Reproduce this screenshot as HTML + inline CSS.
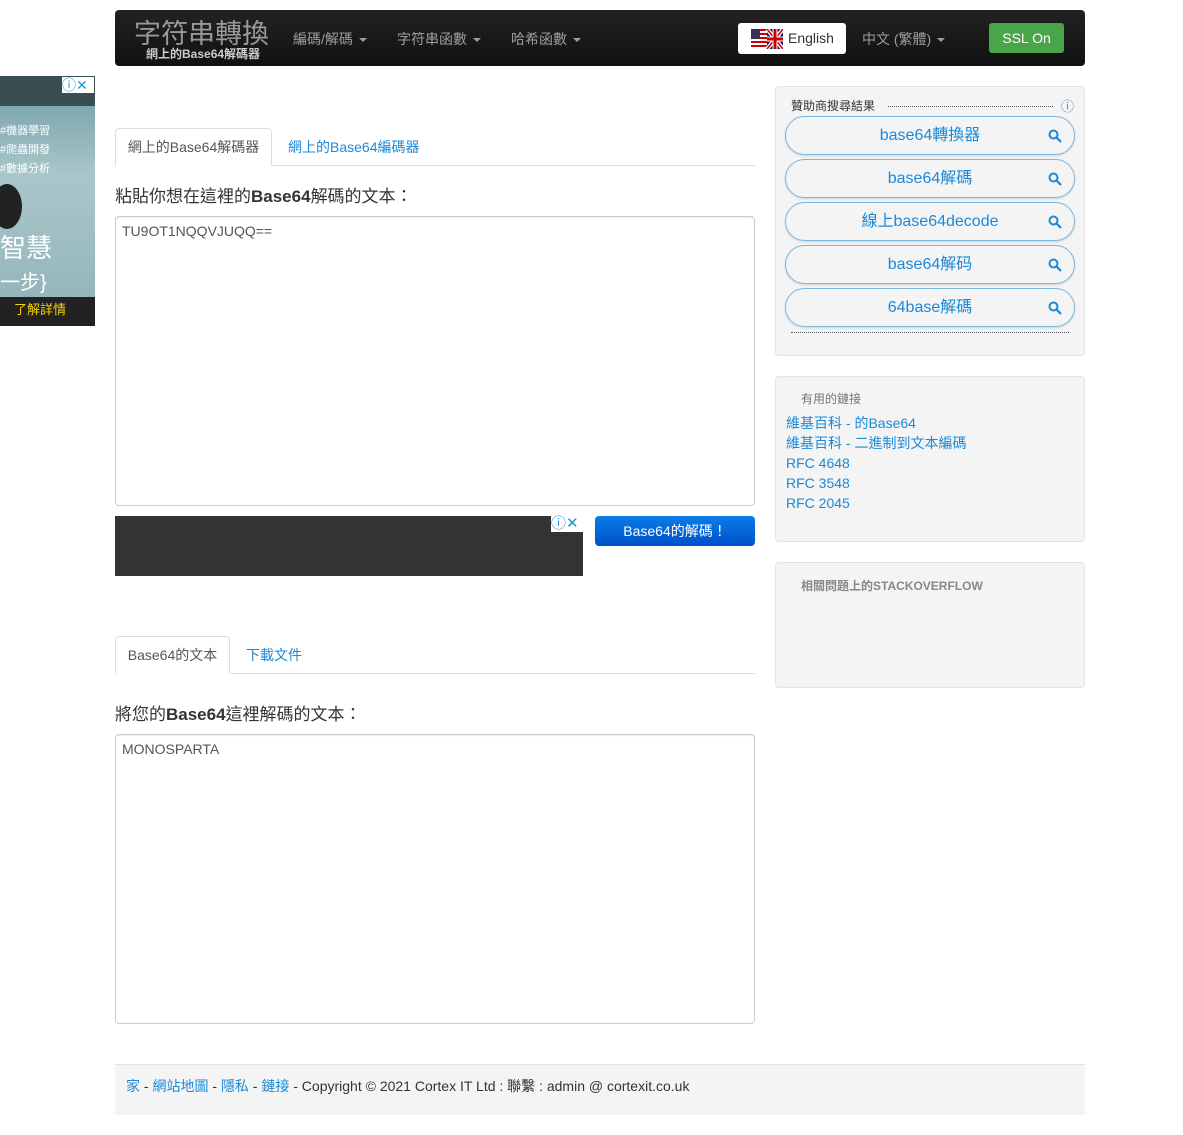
<!DOCTYPE html>
<html><head><meta charset="utf-8"><style>
body{margin:0;width:1183px;height:1135px;position:relative;background:#fff;font-family:"Liberation Sans","Noto Sans CJK TC",sans-serif;font-size:14px;color:#333;overflow:hidden}
.a{position:absolute}
.nav{left:115px;top:10px;width:970px;height:56px;background:linear-gradient(#222,#111);border-radius:4px}
.nav .m{color:#9d9d9d;font-size:14px;top:28px}
.car{display:inline-block;border-left:4px solid transparent;border-right:4px solid transparent;border-top:4px solid #9d9d9d;vertical-align:middle;margin-left:6px}
.tab{border:1px solid #ddd;border-bottom:1px solid #fff;border-radius:4px 4px 0 0;background:#fff;color:#555;font-size:14px;text-align:center;box-sizing:border-box}
.lk{color:#1a8ad8}
.ta{border:1px solid #ccc;border-radius:4px;box-sizing:border-box;padding:12px 6px;font-size:14px;color:#555;box-shadow:inset 0 1px 1px rgba(0,0,0,.075)}
.box{background:#f4f4f4;border:1px solid #e3e3e3;border-radius:4px;box-sizing:border-box}
.pill{left:785px;width:290px;height:39px;border:1px solid #7ab8df;border-radius:20px;box-sizing:border-box;text-align:center;line-height:37px;color:#1a8ad8;font-size:16px;box-shadow:0 1px 2px rgba(0,0,0,.15)}
.pill svg{position:absolute;right:12px;top:12px}
h3{margin:0;font-size:17px;font-weight:normal;color:#333}
</style></head><body>
<div class="a nav">
 <div class="a" style="left:19px;top:2px;font-size:27px;color:#999">字符串轉換</div>
 <div class="a" style="left:31px;top:35px;font-size:12px;color:#ccc;font-weight:bold">網上的Base64解碼器</div>
 <div class="a m" style="left:178px;top:19px">編碼/解碼<span class="car"></span></div>
 <div class="a m" style="left:282px;top:19px">字符串函數<span class="car"></span></div>
 <div class="a m" style="left:396px;top:19px">哈希函數<span class="car"></span></div>
 <div class="a" style="left:623px;top:13px;width:108px;height:31px;background:#fff;border-radius:3px;font-size:14px;color:#333;line-height:31px">
  <svg class="a" style="left:13px;top:6px" width="32" height="20" viewBox="0 0 32 20"><rect width="16" height="20" fill="#fff"/><g fill="#c00"><rect y="0" width="16" height="2"/><rect y="4" width="16" height="2"/><rect y="8" width="16" height="2"/><rect y="12" width="16" height="2"/><rect y="16" width="16" height="2"/></g><rect width="9" height="10" fill="#335"/><rect x="16" width="16" height="20" fill="#012169"/><path d="M16 0L32 20M32 0L16 20" stroke="#fff" stroke-width="4"/><path d="M16 0L32 20M32 0L16 20" stroke="#c00" stroke-width="1.5"/><path d="M24 0V20M16 10H32" stroke="#fff" stroke-width="5"/><path d="M24 0V20M16 10H32" stroke="#c00" stroke-width="3"/></svg>
  <span class="a" style="left:50px">English</span></div>
 <div class="a m" style="left:747px;top:19px">中文 (繁體)<span class="car"></span></div>
 <div class="a" style="left:874px;top:13px;width:75px;height:30px;background:#4aa54a;border-radius:3px;color:#fff;font-size:14px;text-align:center;line-height:30px">SSL On</div>
</div>
<div class="a" style="left:0;top:76px;width:95px;height:250px;background:linear-gradient(#6d9aa0,#a9c7cb 40%,#8fb2b6);overflow:hidden">
 <div class="a" style="left:0;top:0;width:95px;height:30px;background:#3a4d52"></div>
 <div class="a" style="left:62px;top:1px;width:32px;height:16px;background:#fff;color:#1a9ad8;font-size:14px;line-height:16px">ⓘ✕</div>
 <div class="a" style="left:0;top:46px;color:#fff;font-size:11px;line-height:19px">#機器學習<br>#爬蟲開發<br>#數據分析</div>
 <div class="a" style="left:-8px;top:108px;width:30px;height:45px;border-radius:50%;background:#222"></div>
 <div class="a" style="left:0;top:156px;color:#fff;font-size:26px;line-height:32px">智慧<br><span style="font-size:20px">一步}</span></div>
 <div class="a" style="left:0;top:221px;width:95px;height:29px;background:#222;color:#f5d400;font-size:13px;line-height:26px;text-indent:14px;border-bottom:1px solid #f5d400">了解詳情</div>
</div>
<div class="a" style="left:115px;top:165px;width:640px;border-top:1px solid #ddd"></div>
<div class="a tab" style="left:115px;top:128px;width:157px;height:38px;line-height:37px">網上的Base64解碼器</div>
<div class="a lk" style="left:288px;top:137px">網上的Base64編碼器</div>
<h3 class="a" style="left:115px;top:182px">粘貼你想在這裡的<b>Base64</b>解碼的文本：</h3>
<div class="a ta" style="left:115px;top:216px;width:640px;height:290px;padding-top:6px">TU9OT1NQQVJUQQ==</div>
<div class="a" style="left:115px;top:516px;width:468px;height:60px;background:#333"><div class="a" style="left:436px;top:0;width:32px;height:16px;background:#fff;color:#1a9ad8;font-size:15px;line-height:16px">ⓘ✕</div></div>
<div class="a" style="left:595px;top:516px;width:160px;height:30px;background:linear-gradient(#0a7ce8,#0050c8);border-radius:4px;color:#fff;text-align:center;line-height:30px;font-size:14px">Base64的解碼！</div>
<div class="a" style="left:115px;top:673px;width:640px;border-top:1px solid #ddd"></div>
<div class="a tab" style="left:115px;top:636px;width:115px;height:38px;line-height:37px">Base64的文本</div>
<div class="a lk" style="left:246px;top:645px">下載文件</div>
<h3 class="a" style="left:115px;top:700px">將您的<b>Base64</b>這裡解碼的文本：</h3>
<div class="a ta" style="left:115px;top:734px;width:640px;height:290px;padding-top:6px">MONOSPARTA</div>
<div class="a box" style="left:775px;top:86px;width:310px;height:270px">
 <div class="a" style="left:15px;top:10px;font-size:12px;color:#333">贊助商搜尋結果</div>
 <div class="a" style="left:112px;top:19px;width:165px;border-top:1px dotted #555"></div>
 <div class="a" style="left:285px;top:9px;color:#1a9ad8;font-size:13px">ⓘ</div>
 <div class="a" style="left:15px;top:245px;width:278px;border-top:1px dotted #555"></div>
</div>
<div class="a pill" style="top:116px">base64轉換器<svg width="14" height="14" viewBox="0 0 14 14"><circle cx="5.5" cy="5.5" r="4" fill="none" stroke="#1a8ad8" stroke-width="2"/><path d="M8.5 8.5L13 13" stroke="#1a8ad8" stroke-width="2.2"/></svg></div>
<div class="a pill" style="top:159px">base64解碼<svg width="14" height="14" viewBox="0 0 14 14"><circle cx="5.5" cy="5.5" r="4" fill="none" stroke="#1a8ad8" stroke-width="2"/><path d="M8.5 8.5L13 13" stroke="#1a8ad8" stroke-width="2.2"/></svg></div>
<div class="a pill" style="top:202px">線上base64decode<svg width="14" height="14" viewBox="0 0 14 14"><circle cx="5.5" cy="5.5" r="4" fill="none" stroke="#1a8ad8" stroke-width="2"/><path d="M8.5 8.5L13 13" stroke="#1a8ad8" stroke-width="2.2"/></svg></div>
<div class="a pill" style="top:245px">base64解码<svg width="14" height="14" viewBox="0 0 14 14"><circle cx="5.5" cy="5.5" r="4" fill="none" stroke="#1a8ad8" stroke-width="2"/><path d="M8.5 8.5L13 13" stroke="#1a8ad8" stroke-width="2.2"/></svg></div>
<div class="a pill" style="top:288px">64base解碼<svg width="14" height="14" viewBox="0 0 14 14"><circle cx="5.5" cy="5.5" r="4" fill="none" stroke="#1a8ad8" stroke-width="2"/><path d="M8.5 8.5L13 13" stroke="#1a8ad8" stroke-width="2.2"/></svg></div>
<div class="a box" style="left:775px;top:376px;width:310px;height:166px">
 <div class="a" style="left:25px;top:13px;font-size:12px;color:#777">有用的鏈接</div>
 <div class="a lk" style="left:10px;top:36px;line-height:20px">維基百科 - 的Base64<br>維基百科 - 二進制到文本編碼<br>RFC 4648<br>RFC 3548<br>RFC 2045</div>
</div>
<div class="a box" style="left:775px;top:562px;width:310px;height:126px">
 <div class="a" style="left:25px;top:14px;font-size:12px;color:#888;font-weight:bold">相關問題上的STACKOVERFLOW</div>
</div>
<div class="a" style="left:115px;top:1064px;width:970px;height:51px;background:#f4f4f4;border-top:1px solid #e3e3e3;box-sizing:border-box">
 <div class="a" style="left:11px;top:11px;font-size:14px;color:#333"><span class="lk">家</span> - <span class="lk">網站地圖</span> - <span class="lk">隱私</span> - <span class="lk">鏈接</span> - Copyright © 2021 Cortex IT Ltd : 聯繫 : admin @ cortexit.co.uk</div>
</div>
</body></html>
